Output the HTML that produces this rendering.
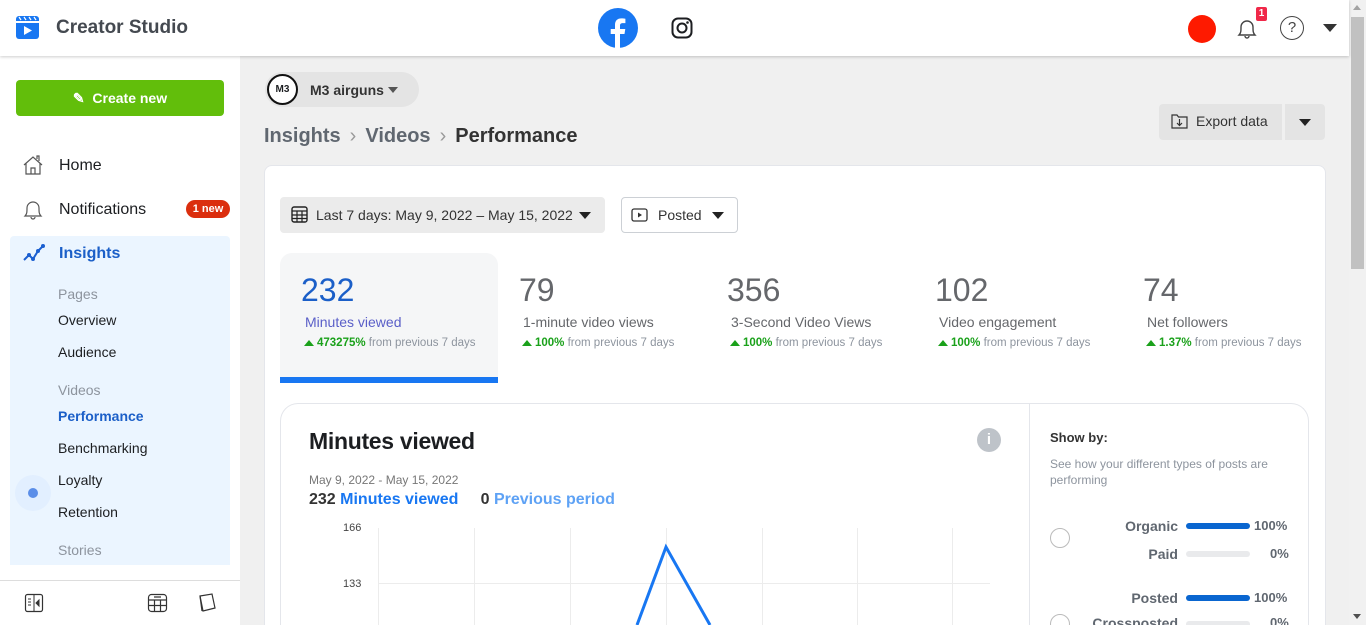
<!DOCTYPE html>
<html style="overflow:hidden;width:1366px;height:625px"><head><meta charset="utf-8"><style>
*{box-sizing:border-box;margin:0;padding:0}
body{width:1366px;height:625px;overflow:hidden;background:#f0f0f0;font-family:"Liberation Sans",Arial,sans-serif;position:relative;color:#1c1e21}
.abs{position:absolute}
.hdr{left:0;top:0;width:1349px;height:56px;background:#fff;box-shadow:0 1px 3px rgba(0,0,0,.2);z-index:5}
.side{left:0;top:56px;width:240px;height:569px;background:#fff}
.nav{position:absolute;left:59px;font-size:16px;color:#1c1e21}
.sub{position:absolute;left:58px;font-size:14px;color:#1c1e21}
.sec{position:absolute;left:58px;font-size:14px;color:#8d949e}
.card{left:264px;top:165px;width:1062px;height:460px;background:#fff;border-radius:8px 8px 0 0;border:1px solid #e4e6eb;border-bottom:none}
.stat .n{position:absolute;font-size:32px;color:#65676b}
.stat .l{position:absolute;font-size:14px;color:#65676b}
.stat .p{position:absolute;font-size:11.5px;color:#8d949e;white-space:nowrap}
.p b{color:#1aa11a}
.tri{display:inline-block;width:0;height:0;border-left:5px solid transparent;border-right:5px solid transparent;border-bottom:6px solid #1aa11a;margin-right:3px}
</style></head><body>
<div class="abs hdr">
 <svg class="abs" style="left:16px;top:16px" width="23" height="23" viewBox="0 0 23 23"><rect x="0" y="0" width="23" height="23" rx="3" fill="#1877f2"/><rect x="0" y="5" width="23" height="2" fill="#fff"/><path d="M3 1l2 3M8 1l2 3M13 1l2 3M18 1l2 3" stroke="#fff" stroke-width="1.2"/><path d="M8 10v9l8-4.5z" fill="#fff"/></svg>
 <div class="abs" style="left:56px;top:17px;font-size:19px;font-weight:bold;color:#444950">Creator Studio</div>
 <svg class="abs" style="left:598px;top:8px" width="40" height="40" viewBox="0 0 40 40"><circle cx="20" cy="20" r="20" fill="#1877f2"/><path d="M22 40V26h4.5l.8-5H22v-3.3c0-1.5.6-2.6 2.8-2.6h2.6v-4.4c-.8-.1-2.4-.3-4-.3-4 0-6.4 2.3-6.4 6.5V21h-4.3v5H17v14z" fill="#fff"/></svg>
 <svg class="abs" style="left:671px;top:17px" width="22" height="22" viewBox="0 0 22 22"><rect x="1.5" y="1.5" width="19" height="19" rx="5.5" fill="none" stroke="#1c1e21" stroke-width="2"/><circle cx="11" cy="11" r="4.5" fill="none" stroke="#1c1e21" stroke-width="2"/><circle cx="16.5" cy="5.5" r="1.3" fill="#1c1e21"/></svg>
 <div class="abs" style="left:1188px;top:15px;width:28px;height:28px;border-radius:50%;background:#fe1a00"></div>
 <svg class="abs" style="left:1236px;top:16px" width="22" height="26" viewBox="0 0 22 26"><path d="M3 19c2-2 2-4 2-8a6 6 0 0 1 12 0c0 4 0 6 2 8z" fill="none" stroke="#444" stroke-width="1.4"/><path d="M9 20a2 2 0 0 0 4 0" fill="none" stroke="#444" stroke-width="1.4"/></svg>
 <div class="abs" style="left:1256px;top:7px;width:11px;height:14px;background:#f02849;border-radius:2px;color:#fff;font-size:10px;font-weight:bold;text-align:center;line-height:14px">1</div>
 <div class="abs" style="left:1280px;top:16px;width:24px;height:24px;border-radius:50%;border:1.4px solid #444;text-align:center;font-size:15px;line-height:22px;color:#444">?</div>
 <div class="abs" style="left:1323px;top:24px;border-left:7px solid transparent;border-right:7px solid transparent;border-top:8px solid #333"></div>
</div>
<div class="abs" style="left:1349px;top:0;width:17px;height:625px;background:#f1f1f1"></div>
<div class="abs" style="left:1351px;top:17px;width:13px;height:252px;background:#c1c1c1"></div>
<div class="abs" style="left:1353px;top:5px;border-left:4px solid transparent;border-right:4px solid transparent;border-bottom:5px solid #a3a3a3"></div>
<div class="abs" style="left:1353px;top:614px;border-left:4px solid transparent;border-right:4px solid transparent;border-top:5px solid #505050"></div>

<div class="abs side">
 <div class="abs" style="left:16px;top:24px;width:208px;height:36px;background:#62be0b;border-radius:4px;color:#fff;font-weight:bold;font-size:14px;text-align:center;line-height:36px">&#9998;&nbsp; Create new</div>
 <svg class="abs" style="left:23px;top:99px" width="20" height="20" viewBox="0 0 20 20"><path d="M1 10L10 2l9 8M3 8v11h14V8M8 19v-6h4v6M14 4V1h2v5" fill="none" stroke="#555" stroke-width="1.2"/></svg>
 <div class="nav" style="top:101px">Home</div>
 <svg class="abs" style="left:23px;top:143px" width="20" height="22" viewBox="0 0 20 22"><path d="M2 17c2-2 2-4 2-8a6 6 0 0 1 12 0c0 4 0 6 2 8z" fill="none" stroke="#555" stroke-width="1.2"/><path d="M8 18a2 2 0 0 0 4 0" fill="none" stroke="#555" stroke-width="1.2"/></svg>
 <div class="nav" style="top:145px">Notifications</div>
 <div class="abs" style="left:186px;top:144px;width:44px;height:18px;background:#db2e0e;border-radius:9px;color:#fff;font-size:11px;font-weight:bold;text-align:center;line-height:18px">1 new</div>
 <div class="abs" style="left:10px;top:180px;width:220px;height:329px;background:#ebf5ff;border-radius:4px 4px 0 0"></div>
 <svg class="abs" style="left:23px;top:188px" width="22" height="20" viewBox="0 0 22 20"><path d="M1 16l5-5 4 4 5-8 5-5" fill="none" stroke="#1b5fd0" stroke-width="2"/><circle cx="6" cy="11" r="2" fill="#1b5fd0"/><circle cx="10" cy="15" r="2" fill="#1b5fd0"/><circle cx="15" cy="7" r="2" fill="#1b5fd0"/><circle cx="20" cy="2" r="2" fill="#1b5fd0"/></svg>
 <div class="nav" style="top:189px;font-weight:bold;color:#1b5fc8">Insights</div>
 <div class="sec" style="top:230px">Pages</div>
 <div class="sub" style="top:256px">Overview</div>
 <div class="sub" style="top:288px">Audience</div>
 <div class="sec" style="top:326px">Videos</div>
 <div class="sub" style="top:352px;font-weight:bold;color:#1b5fc8">Performance</div>
 <div class="sub" style="top:384px">Benchmarking</div>
 <div class="sub" style="top:416px">Loyalty</div>
 <div class="abs" style="left:15px;top:419px;width:36px;height:36px;border-radius:50%;background:#e2efff"></div>
 <div class="abs" style="left:28px;top:432px;width:10px;height:10px;border-radius:50%;background:#5b8ee8"></div>
 <div class="sub" style="top:448px">Retention</div>
 <div class="sec" style="top:486px">Stories</div>
 <div class="abs" style="left:0;top:524px;width:240px;height:1px;background:#ddd"></div>
 <svg class="abs" style="left:24px;top:537px" width="20" height="20" viewBox="0 0 20 20"><rect x="1.5" y="1.5" width="17" height="17" rx="2" fill="none" stroke="#333" stroke-width="1.2"/><path d="M10 1.5v17M4 6h3M4 9h3M4 12h3M15 7l-3 3 3 3z" stroke="#333" fill="#333" stroke-width="1"/></svg>
 <svg class="abs" style="left:147px;top:537px" width="21" height="20" viewBox="0 0 21 20"><rect x="1.5" y="1.5" width="18" height="17" rx="3" fill="none" stroke="#333" stroke-width="1.2"/><path d="M1.5 7h18M1.5 12.5h18M7.5 7v11.5M13.5 7v11.5M7 4h7" stroke="#333" stroke-width="1.2"/></svg>
 <svg class="abs" style="left:196px;top:536px" width="22" height="22" viewBox="0 0 22 22"><path d="M4 4l12-2 3 14-12 3z" fill="none" stroke="#333" stroke-width="1.2"/><path d="M4 4l2 15" stroke="#333" stroke-width="1.2"/></svg>
</div>

<div class="abs" style="left:265px;top:72px;width:154px;height:35px;background:#e4e4e4;border-radius:18px"></div>
<div class="abs" style="left:267px;top:74px;width:31px;height:31px;border-radius:50%;background:#fff;border:2px solid #111;font-size:10px;font-weight:bold;text-align:center;line-height:27px">M3</div>
<div class="abs" style="left:310px;top:82px;font-size:14px;font-weight:bold;color:#333">M3 airguns</div>
<div class="abs" style="left:388px;top:87px;border-left:5px solid transparent;border-right:5px solid transparent;border-top:6px solid #555"></div>
<div class="abs" style="left:264px;top:125px;font-size:20px;font-weight:bold;color:#606770;white-space:nowrap">Insights<span style="font-weight:normal;color:#999;margin:0 9px">›</span>Videos<span style="font-weight:normal;color:#999;margin:0 9px">›</span><span style="color:#333">Performance</span></div>
<div class="abs" style="left:1159px;top:104px;width:123px;height:36px;background:#e4e4e4;border-radius:4px 0 0 4px"></div>
<svg class="abs" style="left:1171px;top:113px" width="17" height="16" viewBox="0 0 17 16"><path d="M1 2h5l1.5 2H16v11H1z" fill="none" stroke="#333" stroke-width="1.2"/><path d="M8.5 6v6M6 10l2.5 2.5L11 10" fill="none" stroke="#333" stroke-width="1.2"/></svg>
<div class="abs" style="left:1196px;top:113px;font-size:14px;color:#333">Export data</div>
<div class="abs" style="left:1285px;top:104px;width:40px;height:36px;background:#e4e4e4;border-radius:0 4px 4px 0"></div>
<div class="abs" style="left:1299px;top:119px;border-left:6px solid transparent;border-right:6px solid transparent;border-top:7px solid #222"></div>

<div class="abs card"></div>
<div class="abs" style="left:280px;top:197px;width:325px;height:36px;background:#ebebeb;border-radius:4px"></div>
<svg class="abs" style="left:291px;top:206px" width="17" height="17" viewBox="0 0 17 17"><rect x="1" y="1" width="15" height="15" rx="2" fill="none" stroke="#222" stroke-width="1.4"/><path d="M1 5h15M1 9h15M1 12.5h15M6 5v11M11 5v11" stroke="#222" stroke-width="1.2"/></svg>
<div class="abs" style="left:316px;top:207px;font-size:14px;color:#333">Last 7 days: May 9, 2022 – May 15, 2022</div>
<div class="abs" style="left:579px;top:212px;border-left:6px solid transparent;border-right:6px solid transparent;border-top:7px solid #222"></div>
<div class="abs" style="left:621px;top:197px;width:117px;height:36px;background:#fff;border:1px solid #ccd0d5;border-radius:4px"></div>
<svg class="abs" style="left:631px;top:208px" width="17" height="14" viewBox="0 0 17 14"><rect x="1" y="1" width="15" height="12" rx="2" fill="none" stroke="#333" stroke-width="1.3"/><path d="M7 4.5v5l4-2.5z" fill="#333"/></svg>
<div class="abs" style="left:658px;top:207px;font-size:14px;color:#333">Posted</div>
<div class="abs" style="left:712px;top:212px;border-left:6px solid transparent;border-right:6px solid transparent;border-top:7px solid #222"></div>

<div class="abs" style="left:280px;top:253px;width:218px;height:129px;background:#f5f6f7;border-radius:12px 12px 0 0"></div>
<div class="abs" style="left:280px;top:377px;width:218px;height:6px;background:#1877f2"></div>
<div class="stat">
 <div class="n" style="left:301px;top:272px;color:#1b5fc8">232</div>
 <div class="l" style="left:305px;top:314px;color:#5a5fc8">Minutes viewed</div>
 <div class="p" style="left:304px;top:337px"><span class="tri"></span><b>473275%</b> from previous 7 days</div>
 <div class="n" style="left:519px;top:272px">79</div>
 <div class="l" style="left:523px;top:314px">1-minute video views</div>
 <div class="p" style="left:522px;top:337px"><span class="tri"></span><b>100%</b> from previous 7 days</div>
 <div class="n" style="left:727px;top:272px">356</div>
 <div class="l" style="left:731px;top:314px">3-Second Video Views</div>
 <div class="p" style="left:730px;top:337px"><span class="tri"></span><b>100%</b> from previous 7 days</div>
 <div class="n" style="left:935px;top:272px">102</div>
 <div class="l" style="left:939px;top:314px">Video engagement</div>
 <div class="p" style="left:938px;top:337px"><span class="tri"></span><b>100%</b> from previous 7 days</div>
 <div class="n" style="left:1143px;top:272px">74</div>
 <div class="l" style="left:1147px;top:314px">Net followers</div>
 <div class="p" style="left:1146px;top:337px"><span class="tri"></span><b>1.37%</b> from previous 7 days</div>
</div>

<div class="abs" style="left:280px;top:403px;width:1029px;height:222px;border:1px solid #e4e6eb;border-bottom:none;border-radius:18px 18px 0 0;background:#fff"></div>
<div class="abs" style="left:1029px;top:404px;width:1px;height:221px;background:#e4e6eb"></div>
<div class="abs" style="left:309px;top:428px;font-size:23px;font-weight:bold;color:#1c1e21;letter-spacing:-.3px">Minutes viewed</div>
<div class="abs" style="left:977px;top:428px;width:24px;height:24px;border-radius:50%;background:#bec3c9;color:#fff;font-weight:bold;font-size:15px;text-align:center;line-height:24px">i</div>
<div class="abs" style="left:309px;top:473px;font-size:12px;color:#777">May 9, 2022 - May 15, 2022</div>
<div class="abs" style="left:309px;top:491px;font-size:16px;font-weight:bold;color:#333">232 <span style="color:#1877f2">Minutes viewed</span>&nbsp;&nbsp;&nbsp;&nbsp; 0 <span style="color:#5ea2f5">Previous period</span></div>
<div class="abs" style="left:343px;top:522px;font-size:11px;color:#444">166</div>
<div class="abs" style="left:343px;top:578px;font-size:11px;color:#444">133</div>
<svg class="abs" style="left:370px;top:520px" width="630" height="105" viewBox="370 520 630 105">
 <g stroke="#ececec" stroke-width="1"><path d="M378.5 528v97M474.5 528v97M570.5 528v97M666.5 528v97M762.5 528v97M857.5 528v97M952.5 528v97M378 583.5h612"/></g>
 <path d="M637 625L666 547 710 625" fill="none" stroke="#1877f2" stroke-width="3"/>
</svg>

<div class="abs" style="left:1050px;top:430px;font-size:13px;font-weight:bold;color:#333">Show by:</div>
<div class="abs" style="left:1050px;top:456px;width:240px;font-size:12px;line-height:16px;color:#8d949e">See how your different types of posts are performing</div>
<div class="abs" style="left:1050px;top:528px;width:20px;height:20px;border-radius:50%;border:1px solid #bbb"></div>
<div class="abs" style="left:1050px;top:614px;width:20px;height:20px;border-radius:50%;border:1px solid #bbb"></div>
<div class="abs" style="left:1080px;top:518px;width:98px;text-align:right;font-size:14px;font-weight:bold;color:#606770">Organic</div>
<div class="abs" style="left:1186px;top:523px;width:64px;height:6px;border-radius:3px;background:#0a66d0"></div>
<div class="abs" style="left:1254px;top:518px;font-size:13px;font-weight:bold;color:#606770">100%</div>
<div class="abs" style="left:1080px;top:546px;width:98px;text-align:right;font-size:14px;font-weight:bold;color:#606770">Paid</div>
<div class="abs" style="left:1186px;top:551px;width:64px;height:6px;border-radius:3px;background:#e9eaec"></div>
<div class="abs" style="left:1270px;top:546px;font-size:13px;font-weight:bold;color:#606770">0%</div>
<div class="abs" style="left:1080px;top:590px;width:98px;text-align:right;font-size:14px;font-weight:bold;color:#606770">Posted</div>
<div class="abs" style="left:1186px;top:595px;width:64px;height:6px;border-radius:3px;background:#0a66d0"></div>
<div class="abs" style="left:1254px;top:590px;font-size:13px;font-weight:bold;color:#606770">100%</div>
<div class="abs" style="left:1080px;top:615px;width:98px;text-align:right;font-size:14px;font-weight:bold;color:#606770">Crossposted</div>
<div class="abs" style="left:1186px;top:621px;width:64px;height:4px;border-radius:3px 3px 0 0;background:#e9eaec"></div>
<div class="abs" style="left:1270px;top:615px;font-size:13px;font-weight:bold;color:#606770">0%</div>
</body></html>
